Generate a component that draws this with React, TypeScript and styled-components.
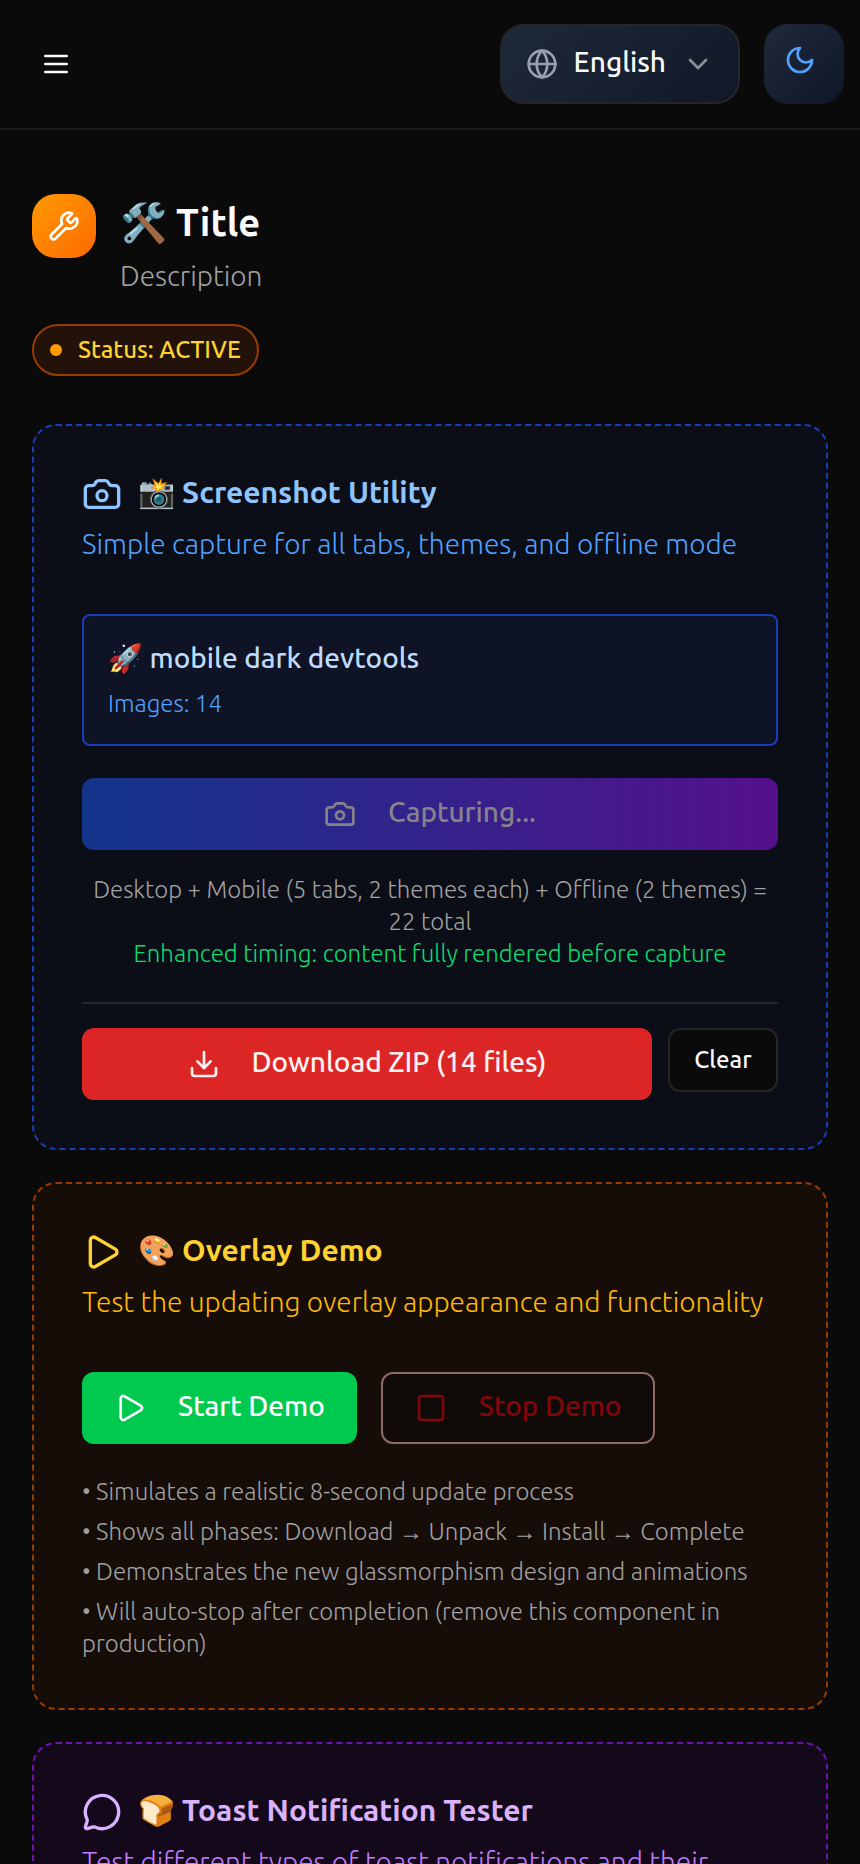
import React from 'react';
import styled, { createGlobalStyle, css } from 'styled-components';
import { Camera, ChevronDown, Download, Globe, MessageCircle, Play, Square, Wrench } from 'lucide-react';

const GlobalStyle = createGlobalStyle`
  *, *::before, *::after { box-sizing: border-box; }
  body {
    margin: 0;
    background: #0a0a0a;
    color: #fafafa;
    font-family: Ubuntu, "Noto Sans", sans-serif;
    font-size: 28px;
    line-height: 40px;
    font-weight: 300;
  }
  h1, h2, p, ul { margin: 0; padding: 0; }
  button { font-family: inherit; cursor: pointer; }
  button:disabled { cursor: not-allowed; }
  svg { flex-shrink: 0; display: block; }
`;

const Shell = styled.div`
  height: 100vh;
  overflow-y: auto;
  scrollbar-width: none;
`;

const TopBar = styled.header`
  display: flex;
  align-items: center;
  justify-content: space-between;
  padding: 24px 16px;
  border-bottom: 2px solid #171717;
`;

const TopActions = styled.div`
  display: flex;
  gap: 24px;
`;

const MenuButton = styled.button`
  display: grid;
  place-items: center;
  width: 80px;
  height: 80px;
  padding: 0;
  border: 0;
  background: none;
  color: #fafafa;
`;

const surface = css`
  height: 80px;
  border-radius: 24px;
  background: linear-gradient(135deg, #1e2939, #101828);
`;

const LanguageButton = styled.button`
  ${surface}
  display: flex;
  align-items: center;
  gap: 16px;
  padding: 0 24px;
  border: 2px solid #262626;
  background-origin: border-box;
  color: #fafafa;
  font-size: 28px;
  line-height: 40px;
  font-weight: 500;

  svg:first-child { color: #99a1af; }
  svg:last-child { color: #8b8f96; }
`;

const ThemeButton = styled.button`
  ${surface}
  display: flex;
  align-items: flex-start;
  width: 80px;
  padding: 20px;
  border: 0;
  color: #51a2ff;
`;

const Main = styled.main`
  display: flex;
  flex-direction: column;
  gap: 32px;
  padding: 64px 32px;
`;

const PageHead = styled.section`
  display: flex;
  flex-direction: column;
  align-items: flex-start;
  gap: 28px;
  margin-bottom: 16px;
`;

const Heading = styled.div`
  display: flex;
  align-items: flex-start;
  gap: 24px;
`;

const HeadIcon = styled.span`
  display: grid;
  place-items: center;
  width: 64px;
  height: 64px;
  border-radius: 24px;
  background: linear-gradient(135deg, #fe9a00, #ff6900);
  color: #fff;
`;

const PageTitle = styled.h1`
  margin-bottom: 6px;
  font-size: 38px;
  line-height: 56px;
  font-weight: 600;
`;

const Muted = styled.p`
  color: #a1a1a1;
`;

const Badge = styled.span`
  display: inline-flex;
  align-items: center;
  gap: 16px;
  padding: 8px 16px;
  border: 2px solid #973c00;
  border-radius: 26px;
  background: #22120a;
  color: #ffd230;
  font-size: 24px;
  line-height: 32px;
  font-weight: 500;

  &::before {
    content: "";
    width: 12px;
    height: 12px;
    border-radius: 50%;
    background: #fe9a00;
  }
`;

type Tone = 'blue' | 'amber' | 'purple';
const tones: Record<Tone, { border: string; bg: string; title: string; text: string }> = {
  blue: { border: '#193cb8', bg: '#0b0d17', title: '#8ec5ff', text: '#51a2ff' },
  amber: { border: '#973c00', bg: '#160d08', title: '#ffd230', text: '#ffb900' },
  purple: { border: '#6e11b0', bg: '#14081b', title: '#dab2ff', text: '#c27aff' },
};

const CardBox = styled.section<{ $tone: Tone }>`
  padding: 48px;
  border: 2px dashed ${p => tones[p.$tone].border};
  border-radius: 24px;
  background: ${p => tones[p.$tone].bg};
`;

const Label = styled.span`
  padding-bottom: 4px;
`;

const CardTitle = styled.h2<{ $tone: Tone }>`
  display: flex;
  align-items: center;
  gap: 16px;
  height: 40px;
  margin-bottom: 10px;
  color: ${p => tones[p.$tone].title};
  font-size: 30px;
  line-height: 32px;
  font-weight: 600;
`;

const CardText = styled.p<{ $tone: Tone }>`
  color: ${p => tones[p.$tone].text};
`;

const CardBody = styled.div`
  margin-top: 50px;
`;

const Job = styled.div`
  margin-bottom: 32px;
  padding: 24px;
  border: 2px solid #193cb8;
  border-radius: 8px;
  background: #0e1325;
  color: #51a2ff;
  font-size: 24px;
  line-height: 32px;
`;

const JobName = styled.p`
  margin-bottom: 12px;
  color: #bedbff;
  font-size: 28px;
  line-height: 36px;
  font-weight: 500;
`;

type Look = 'capture' | 'danger' | 'success' | 'stop';
const looks = {
  capture: css`
    width: 100%;
    background: linear-gradient(90deg, #13358b, #54108a);
    color: #86838b;
  `,
  danger: css`
    flex: 1;
    background: #dc2626;
    color: #fef2f2;
  `,
  success: css`
    background: #00c950;
    color: #fff;
  `,
  stop: css`
    border: 2px solid #8f6a69;
    background: #100a09;
    color: #82070b;
  `,
};

const ActionButton = styled.button<{ $look: Look }>`
  display: flex;
  align-items: center;
  justify-content: center;
  gap: 32px;
  height: 72px;
  padding: 0 32px;
  border: 0;
  border-radius: 12px;
  font-size: 28px;
  line-height: 40px;
  font-weight: 500;
  ${p => looks[p.$look]}
`;

const ClearButton = styled.button`
  min-width: 110px;
  height: 64px;
  padding: 0 24px;
  border: 2px solid #262626;
  border-radius: 12px;
  background: #0a0a0a;
  color: #fafafa;
  font-size: 24px;
  line-height: 32px;
  font-weight: 500;
`;

const Summary = styled.p`
  margin: 24px 0 32px;
  color: #a1a1a1;
  font-size: 24px;
  line-height: 32px;
  text-align: center;
`;

const Timing = styled.span`
  display: block;
  color: #05df72;
`;

const DownloadRow = styled.div`
  display: flex;
  align-items: flex-start;
  gap: 16px;
  padding-top: 24px;
  border-top: 2px solid #262626;
`;

const DemoRow = styled.div`
  display: flex;
  gap: 24px;
`;

const Notes = styled.ul`
  display: flex;
  flex-direction: column;
  gap: 8px;
  margin-top: 32px;
  color: #a1a1a1;
  font-size: 24px;
  line-height: 32px;
  list-style: none;

  li::before { content: "• "; }
`;

const MenuIcon = () => (
  <svg width="32" height="32" viewBox="0 0 24 24" fill="none" stroke="currentColor" strokeWidth="2" strokeLinecap="round" aria-hidden="true">
    <path d="M4 6h16M4 12h16M4 18h16" />
  </svg>
);

const MoonIcon = () => (
  <svg width="32" height="32" viewBox="0 0 24 24" fill="none" stroke="currentColor" strokeWidth="2" strokeLinecap="round" strokeLinejoin="round" aria-hidden="true">
    <path d="M12 3a6 6 0 0 0 9 9 9 9 0 1 1-9-9Z" />
  </svg>
);

interface CardProps {
  tone: Tone;
  icon: React.ReactNode;
  title: string;
  text: string;
  children?: React.ReactNode;
}

const Card = ({ tone, icon, title, text, children }: CardProps) => (
  <CardBox $tone={tone}>
    <CardTitle $tone={tone}>{icon}<Label>{title}</Label></CardTitle>
    <CardText $tone={tone}>{text}</CardText>
    {children && <CardBody>{children}</CardBody>}
  </CardBox>
);

const notes = [
  'Simulates a realistic 8-second update process',
  'Shows all phases: Download → Unpack → Install → Complete',
  'Demonstrates the new glassmorphism design and animations',
  'Will auto-stop after completion (remove this component in production)',
];

export default function App() {
  return (
    <>
      <GlobalStyle />
      <Shell>
        <TopBar>
          <MenuButton type="button" aria-label="Menu"><MenuIcon /></MenuButton>
          <TopActions>
            <LanguageButton type="button">
              <Globe size={32} />
              <Label>English</Label>
              <ChevronDown size={32} />
            </LanguageButton>
            <ThemeButton type="button" aria-label="Theme"><MoonIcon /></ThemeButton>
          </TopActions>
        </TopBar>
        <Main>
          <PageHead>
            <Heading>
              <HeadIcon><Wrench size={32} /></HeadIcon>
              <div>
                <PageTitle>🛠️ Title</PageTitle>
                <Muted>Description</Muted>
              </div>
            </Heading>
            <Badge>Status: ACTIVE</Badge>
          </PageHead>

          <Card tone="blue" icon={<Camera size={40} />} title="📸 Screenshot Utility" text="Simple capture for all tabs, themes, and offline mode">
            <Job>
              <JobName>🚀 mobile dark devtools</JobName>
              <p>Images: 14</p>
            </Job>
            <ActionButton type="button" $look="capture" disabled><Camera size={32} /><Label>Capturing...</Label></ActionButton>
            <Summary>
              Desktop + Mobile (5 tabs, 2 themes each) + Offline (2 themes) = 22 total
              <Timing>Enhanced timing: content fully rendered before capture</Timing>
            </Summary>
            <DownloadRow>
              <ActionButton type="button" $look="danger"><Download size={32} /><Label>Download ZIP (14 files)</Label></ActionButton>
              <ClearButton type="button">Clear</ClearButton>
            </DownloadRow>
          </Card>

          <Card tone="amber" icon={<Play size={40} />} title="🎨 Overlay Demo" text="Test the updating overlay appearance and functionality">
            <DemoRow>
              <ActionButton type="button" $look="success"><Play size={32} /><Label>Start Demo</Label></ActionButton>
              <ActionButton type="button" $look="stop" disabled><Square size={32} /><Label>Stop Demo</Label></ActionButton>
            </DemoRow>
            <Notes>{notes.map(n => <li key={n}>{n}</li>)}</Notes>
          </Card>

          <Card tone="purple" icon={<MessageCircle size={40} />} title="🍞 Toast Notification Tester" text="Test different types of toast notifications and their" />
        </Main>
      </Shell>
    </>
  );
}
